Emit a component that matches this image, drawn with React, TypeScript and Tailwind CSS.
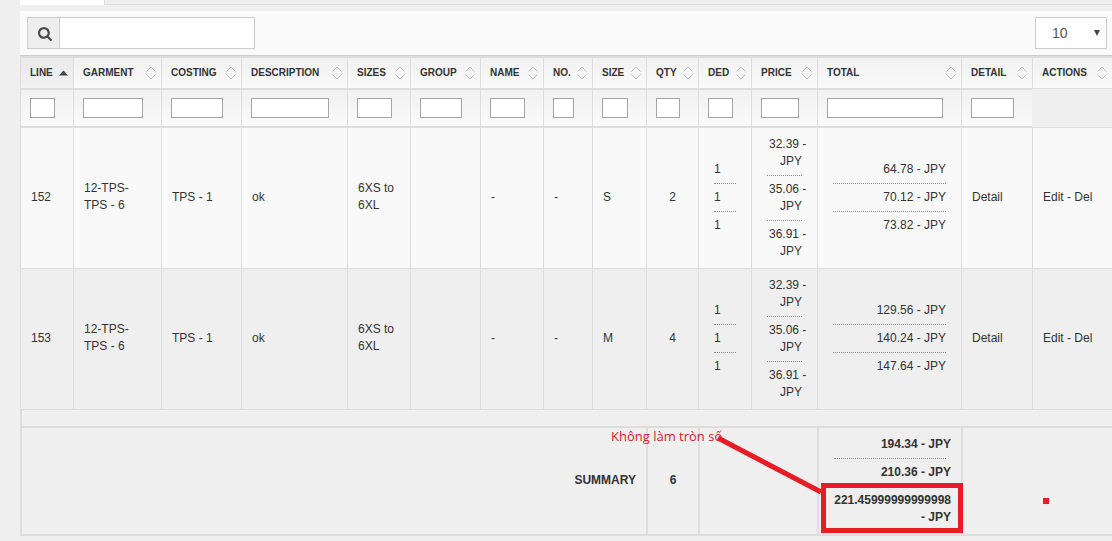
import { Fragment } from "react";
import type { ReactNode } from "react";

const columns = [
  { label: "Line", width: "w-[53px]" },
  { label: "Garment", width: "w-[88px]" },
  { label: "Costing", width: "w-[80px]" },
  { label: "Description", width: "w-[106px]" },
  { label: "Sizes", width: "w-[63px]" },
  { label: "Group", width: "w-[70px]" },
  { label: "Name", width: "w-[63px]" },
  { label: "No.", width: "w-[49px]" },
  { label: "Size", width: "w-[54px]" },
  { label: "Qty", width: "w-[52px]" },
  { label: "Ded", width: "w-[53px]" },
  { label: "Price", width: "w-[66px]" },
  { label: "Total", width: "w-[144px]" },
  { label: "Detail", width: "w-[71px]" },
  { label: "Actions", width: "w-[80px]" },
];

const rows = [
  { line: 152, size: "S", qty: 2, totals: ["64.78", "70.12", "73.82"] },
  { line: 153, size: "M", qty: 4, totals: ["129.56", "140.24", "147.64"] },
];

const prices = ["32.39", "35.06", "36.91"];

function SortIcon({ active }: { active: boolean }) {
  return active ? (
    <svg width="9" height="14" viewBox="0 0 9 14" className="shrink-0" aria-hidden="true">
      <path d="M0 9.5 4.5 4.5 9 9.5Z" fill="#444" />
    </svg>
  ) : (
    <svg width="10" height="14" viewBox="0 0 10 14" className="shrink-0" fill="none" stroke="#bdbdbd" aria-hidden="true">
      <path d="M.5 5.5 5 1 9.500 5.500M.5 8.500 5 13 9.500 8.500" />
    </svg>
  );
}

function SearchIcon() {
  return (
    <svg width="15" height="15" viewBox="0 0 1792 1792" fill="#4a4a4a" aria-hidden="true">
      <path d="M1152 832q0-185-131.500-316.500t-316.500-131.500-316.500 131.500-131.500 316.500 131.500 316.500 316.500 131.500 316.500-131.500 131.500-316.500zm512 832q0 52-38 90t-90 38q-54 0-90-38l-343-342q-179 124-399 124-143 0-273.500-55.500t-225-150-150-225-55.500-273.500 55.500-273.500 150-225 225-150 273.500-55.500 273.500 55.500 225 150 150 225 55.500 273.500q0 220-124 399l343 343q37 37 37 90z" />
    </svg>
  );
}

function Cell({ children, className = "pt-0.5 pb-1" }: { children?: ReactNode; className?: string }) {
  return <td className={`border-t border-l border-[#ddd] px-2.5 ${className}`}>{children}</td>;
}

function Stack({ items }: { items: ReactNode[] }) {
  return (
    <ul className="mx-[5px]">
      {items.map((item, i) => (
        <li key={i} className="border-b border-dotted border-[#888] py-[5px] last:border-b-0">
          {item}
        </li>
      ))}
    </ul>
  );
}

function Toolbar() {
  return (
    <div className="flex items-center justify-between border-b border-[#ccc] bg-[#fafafa] py-1.5 pr-[5px] pl-[7px]">
      <div className="flex h-8 w-[228px] border border-[#ccc]">
        <label htmlFor="search" className="flex w-8 shrink-0 items-center justify-center border-r border-[#ccc] bg-[#eee] pl-1" aria-label="Search">
          <SearchIcon />
        </label>
        <input id="search" type="text" className="min-w-0 flex-1 bg-white px-2 text-sm outline-none" />
      </div>
      <div className="relative">
        <select aria-label="Rows per page" defaultValue="10" className="h-8 w-[72px] appearance-none border border-[#ccc] bg-white pl-4 text-sm text-[#555]">
          <option>10</option>
          <option>25</option>
          <option>50</option>
        </select>
        <svg width="6" height="6" viewBox="0 0 6 6" className="pointer-events-none absolute top-[13px] right-[7px]" aria-hidden="true">
          <path d="M0 0H6L3 6Z" fill="#444" />
        </svg>
      </div>
    </div>
  );
}

function OrderTable() {
  const summary = ["194.34", "210.36", "221.45999999999998"];
  return (
    <table className="w-full table-fixed border-separate border-spacing-0">
      <colgroup>
        {columns.map((c) => (
          <col key={c.label} className={c.width} />
        ))}
      </colgroup>
      <thead>
        <tr>
          {columns.map((c, i) => (
            <th
              key={c.label}
              className={`border-t-2 border-b border-l border-[#ddd] bg-linear-to-b p-0 ${i === 0 ? "from-[#e9e9e9] to-[#f1f1f1]" : "from-[#f1f1f1] to-[#fafafa]"}`}
            >
              <button type="button" className="flex h-[30px] w-full items-center justify-between pr-[5px] pl-[9px] text-[10px] font-bold whitespace-nowrap uppercase">
                <span className="pb-0.5">{c.label}</span>
                <SortIcon active={i === 0} />
              </button>
            </th>
          ))}
        </tr>
        <tr>
          {columns.map((c) =>
            c.label === "Actions" ? (
              <td key={c.label} />
            ) : (
              <th key={c.label} className="border-t border-b border-l border-[#ddd] bg-linear-to-b from-[#f1f1f1] to-[#fafafa] py-2 pr-[18px] pl-[9px]">
                <input type="text" aria-label={`Filter ${c.label}`} className="block h-5 w-full border border-[#a5a5a5] bg-white" />
              </th>
            ),
          )}
        </tr>
      </thead>
      <tbody>
        {rows.map((r) => (
          <tr key={r.line} className="odd:bg-[#f9f9f9]">
            <Cell>{r.line}</Cell>
            <Cell>12-TPS-TPS - 6</Cell>
            <Cell>TPS - 1</Cell>
            <Cell>ok</Cell>
            <Cell>6XS to 6XL</Cell>
            <Cell />
            <Cell>-</Cell>
            <Cell>-</Cell>
            <Cell>{r.size}</Cell>
            <Cell className="pt-0.5 pb-1 text-center">{r.qty}</Cell>
            <Cell>
              <Stack items={["1", "1", "1"]} />
            </Cell>
            <Cell className="py-[3px] text-right">
              <Stack
                items={prices.map((p) => (
                  <div className="pl-0.5">
                    <span className="whitespace-nowrap">{p} -</span> JPY
                  </div>
                ))}
              />
            </Cell>
            <Cell className="pt-0.5 pb-1 text-right">
              <Stack items={r.totals.map((t) => `${t} - JPY`)} />
            </Cell>
            <Cell>
              <a href="#detail">Detail</a>
            </Cell>
            <Cell className="pt-0.5 pb-1 whitespace-nowrap">
              <a href="#edit">Edit</a> - <a href="#del">Del</a>
            </Cell>
          </tr>
        ))}
      </tbody>
      <tfoot className="font-bold">
        <tr>
          <td colSpan={15} className="h-[17px] border-t border-l-2 border-[#ddd]" />
        </tr>
        <tr>
          <td colSpan={9} className="border-y-2 border-l-2 border-[#ddd] px-2.5 pb-0.5 text-right">
            SUMMARY
          </td>
          <td className="border-y-2 border-l-2 border-[#ddd] pb-0.5 text-center">6</td>
          <td colSpan={2} className="border-y-2 border-l-2 border-[#ddd]" />
          <td className="relative z-10 border-y-2 border-l-2 border-[#ddd] px-2.5 py-[3px] text-right">
            {summary.map((s, i) => (
              <Fragment key={s}>
                <div className="py-[5px]">{s} - JPY</div>
                {i < 2 && <div className={i === 0 ? "mx-[5px] border-b border-dotted border-[#888]" : "h-px"} />}
              </Fragment>
            ))}
            <div className="absolute top-[55px] -right-0.5 left-0.5 h-[50px] border-[5px] border-[#e81c24]" />
            <div className="absolute top-0 left-[-208px] font-['Open_Sans',sans-serif] text-[13px] font-normal whitespace-nowrap text-[#e0202c]">
              Không làm tròn số
            </div>
            <svg width="110" height="64" viewBox="0 0 110 64" className="absolute top-[5px] left-[-105px]" aria-hidden="true">
              <path d="M4 5 107 59" stroke="#e81c24" strokeWidth="5" />
            </svg>
          </td>
          <td colSpan={2} className="relative border-y-2 border-l-2 border-[#ddd]">
            <div className="absolute top-[70px] left-20 size-1.5 bg-[#e81c24]" />
          </td>
        </tr>
      </tfoot>
    </table>
  );
}

export default function App() {
  return (
    <div className="min-h-screen overflow-hidden bg-[#efefef] pl-5 font-['Liberation_Sans',Arial,sans-serif] text-xs leading-[17px] text-[#333]">
      <div className="mb-1.5 flex h-[5px]">
        <div className="w-[85px] border-r border-[#ddd] bg-white" />
        <div className="flex-1 border-b border-[#ddd]" />
      </div>
      <Toolbar />
      <OrderTable />
    </div>
  );
}
